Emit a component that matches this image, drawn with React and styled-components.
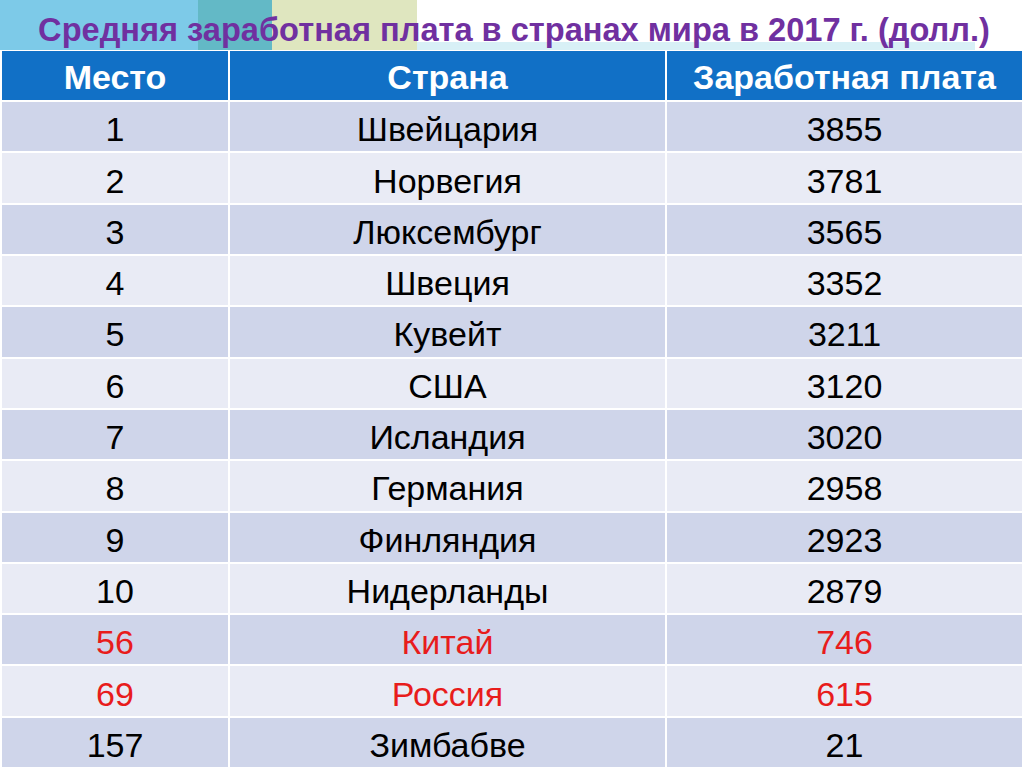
import React from 'react';
import styled, { createGlobalStyle } from 'styled-components';

const GlobalStyle = createGlobalStyle`
  html, body {
    margin: 0;
    padding: 0;
    background: #ffffff;
    overflow: hidden;
  }
  body {
    font-family: "Liberation Sans", Arial, sans-serif;
  }
`;

const Slide = styled.div`
  width: 1024px;
  height: 767px;
  overflow: hidden;
  display: flex;
  flex-direction: column;
`;

const TitleBar = styled.div`
  height: 52px;
  display: flex;
  align-items: center;
  justify-content: center;
  background:
    linear-gradient(#d8f0f6, #d8f0f6) 417px 42px / 558px 8px no-repeat,
    linear-gradient(
      to right,
      #7dcae8 0 198px,
      #63b9c6 198px 272px,
      #dfe6bf 272px 417px,
      #ffffff 417px
    ) 0 0 / 100% 50px no-repeat;
`;

const Title = styled.h1`
  margin: 0;
  font-size: 32.6px;
  font-weight: bold;
  color: #7030a0;
  white-space: nowrap;
  padding-top: 9px;
  margin-left: 4px;
`;

const Grid = styled.div`
  display: grid;
  grid-template-columns: 226px 435px 355px;
  grid-auto-rows: 49.3px;
  grid-template-rows: 49px;
  gap: 2px;
  padding-left: 2px;
`;

const HeadCell = styled.div`
  background: #1170c6;
  color: #ffffff;
  font-weight: bold;
  font-size: 34px;
  padding-top: 3px;
  display: flex;
  align-items: center;
  justify-content: center;
`;

const Cell = styled.div`
  background: ${(p) => (p.$odd ? '#cfd5ea' : '#e9ebf5')};
  color: ${(p) => (p.$hot ? '#e81c1c' : '#000000')};
  font-size: 34px;
  padding-top: 6px;
  display: flex;
  align-items: center;
  justify-content: center;
`;

const rows = [
  ['1', 'Швейцария', '3855'],
  ['2', 'Норвегия', '3781'],
  ['3', 'Люксембург', '3565'],
  ['4', 'Швеция', '3352'],
  ['5', 'Кувейт', '3211'],
  ['6', 'США', '3120'],
  ['7', 'Исландия', '3020'],
  ['8', 'Германия', '2958'],
  ['9', 'Финляндия', '2923'],
  ['10', 'Нидерланды', '2879'],
  ['56', 'Китай', '746', true],
  ['69', 'Россия', '615', true],
  ['157', 'Зимбабве', '21'],
];

const App = () => {
  return (
    <Slide>
      <GlobalStyle />
      <TitleBar>
        <Title>Средняя заработная плата в странах мира в 2017 г. (долл.)</Title>
      </TitleBar>
      <Grid>
        <HeadCell>Место</HeadCell>
        <HeadCell>Страна</HeadCell>
        <HeadCell>Заработная плата</HeadCell>
        {rows.map(([place, country, pay, hot], i) => (
          <React.Fragment key={place}>
            <Cell $odd={i % 2 === 0} $hot={hot}>{place}</Cell>
            <Cell $odd={i % 2 === 0} $hot={hot}>{country}</Cell>
            <Cell $odd={i % 2 === 0} $hot={hot}>{pay}</Cell>
          </React.Fragment>
        ))}
      </Grid>
    </Slide>
  );
};

export default App;
